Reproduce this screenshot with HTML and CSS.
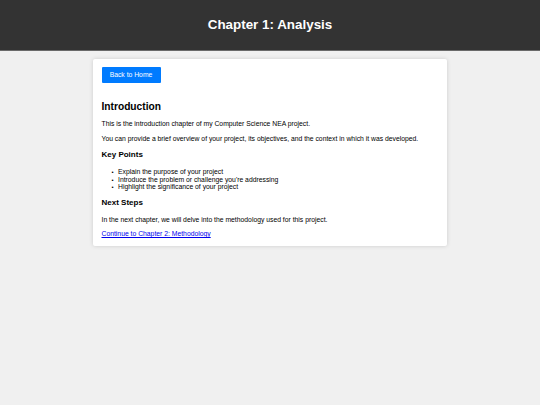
FILE: index.html
```html
<!DOCTYPE html>
<html lang="en">
<head>
<meta charset="utf-8">
<title>Chapter 1: Analysis</title>
<link rel="stylesheet" href="styles.css">
</head>
<body>
<header class="site-header">
  <h1 class="site-title">Chapter 1: Analysis</h1>
</header>
<main class="card">
  <a class="btn" href="#">Back to Home</a>
  <h2 class="h2">Introduction</h2>
  <p class="p">This is the introduction chapter of my Computer Science NEA project.</p>
  <p class="p p2">You can provide a brief overview of your project, its objectives, and the context in which it was developed.</p>
  <h3 class="h3">Key Points</h3>
  <ul class="list">
    <li>Explain the purpose of your project</li>
    <li>Introduce the problem or challenge you're addressing</li>
    <li>Highlight the significance of your project</li>
  </ul>
  <h3 class="h3">Next Steps</h3>
  <p class="p">In the next chapter, we will delve into the methodology used for this project.</p>
  <p class="p last"><a class="link" href="#">Continue to Chapter 2: Methodology</a></p>
</main>
</body>
</html>
```

FILE: styles.css
```css
html, body {
  margin: 0;
  padding: 0;
}
body {
  background: #f0f0f0;
  font-family: "Liberation Sans", Arial, sans-serif;
  font-size: 6.8px;
  line-height: 1.15;
  color: #000;
  height: 405px;
}
.site-header {
  background: #333333;
  color: #fff;
  text-align: center;
  padding: 7px 0;
  border-bottom: 1px solid #6a6a6a;
  box-sizing: border-box;
  height: 51px;
}
.site-title {
  margin: 9px 0;
  font-size: 13.4px;
  line-height: 17px;
  font-weight: bold;
}
.card {
  display: block;
  width: 354px;
  box-sizing: border-box;
  margin: 8px auto 0;
  background: #fff;
  padding: 8px 8.5px 7.5px;
  border-radius: 2px;
  box-shadow: 0 0 4px rgba(0,0,0,0.15);
}
.btn {
  display: inline-block;
  background: #007bff;
  color: #fff;
  text-decoration: none;
  width: 59px;
  height: 16px;
  line-height: 16px;
  text-align: center;
  font-size: 6.8px;
  border-radius: 1px;
}
.h2 {
  font-size: 10.2px;
  font-weight: bold;
  margin: 18px 0 6px;
}
.h3 {
  font-size: 8px;
  font-weight: bold;
  margin: 7px 0;
}
.p {
  margin: 6.8px 0;
}
.p2 {
  margin-top: 7.8px;
}
.p.last {
  margin-top: 6.8px;
  margin-bottom: 0;
}
.list {
  margin: 8.8px 0 6.8px;
  padding-left: 16.5px;
  list-style: none;
}
.list li {
  line-height: 7.6px;
}
.list li::before {
  content: "\2022";
  display: inline-block;
  width: 6.5px;
  margin-left: -6.5px;
  font-size: 6px;
  line-height: 0;
}
.h3 + .p {
  margin-top: 8.8px;
}
.link {
  color: #0000ee;
}
```
